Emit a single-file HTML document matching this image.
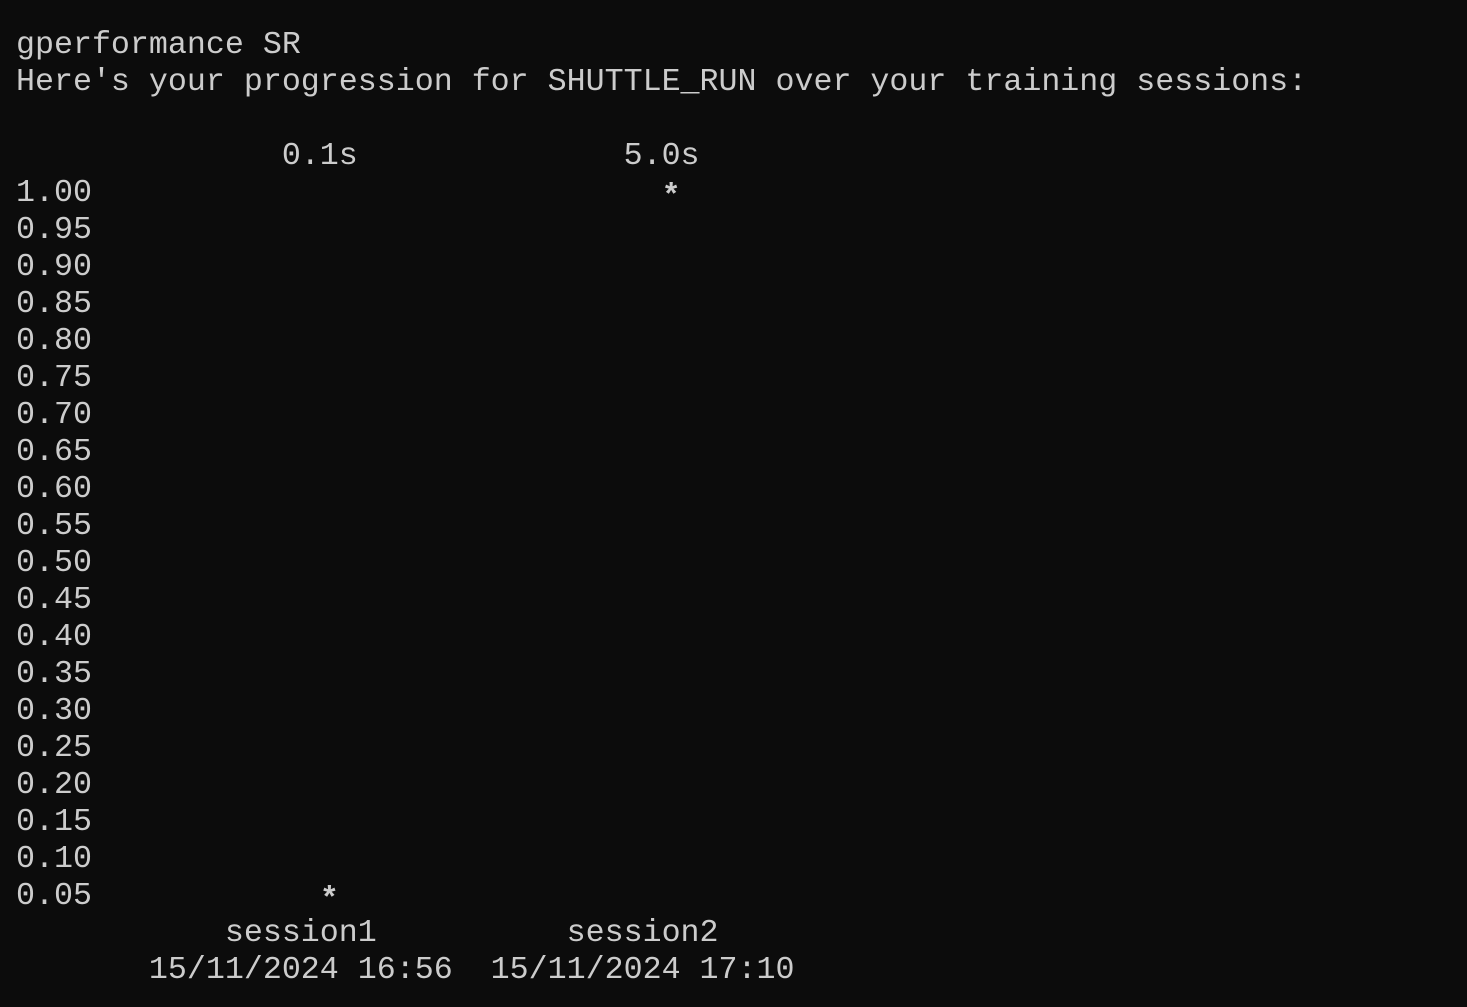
<!DOCTYPE html>
<html><head><meta charset="utf-8"><style>
html,body{margin:0;padding:0;background:#0c0c0c;width:1467px;height:1007px;overflow:hidden}
pre{margin:0;position:absolute;left:16px;top:27px;font-family:"Liberation Mono",monospace;font-size:31.65px;line-height:37px;color:#cccccc;white-space:pre}
.s{position:relative;top:4px;font-weight:bold}
</style></head><body><pre>gperformance SR
Here's your progression for SHUTTLE_RUN over your training sessions:

              0.1s              5.0s
1.00                              <span class="s">*</span>
0.95
0.90
0.85
0.80
0.75
0.70
0.65
0.60
0.55
0.50
0.45
0.40
0.35
0.30
0.25
0.20
0.15
0.10
0.05            <span class="s">*</span>
           session1          session2
       15/11/2024 16:56  15/11/2024 17:10</pre></body></html>
